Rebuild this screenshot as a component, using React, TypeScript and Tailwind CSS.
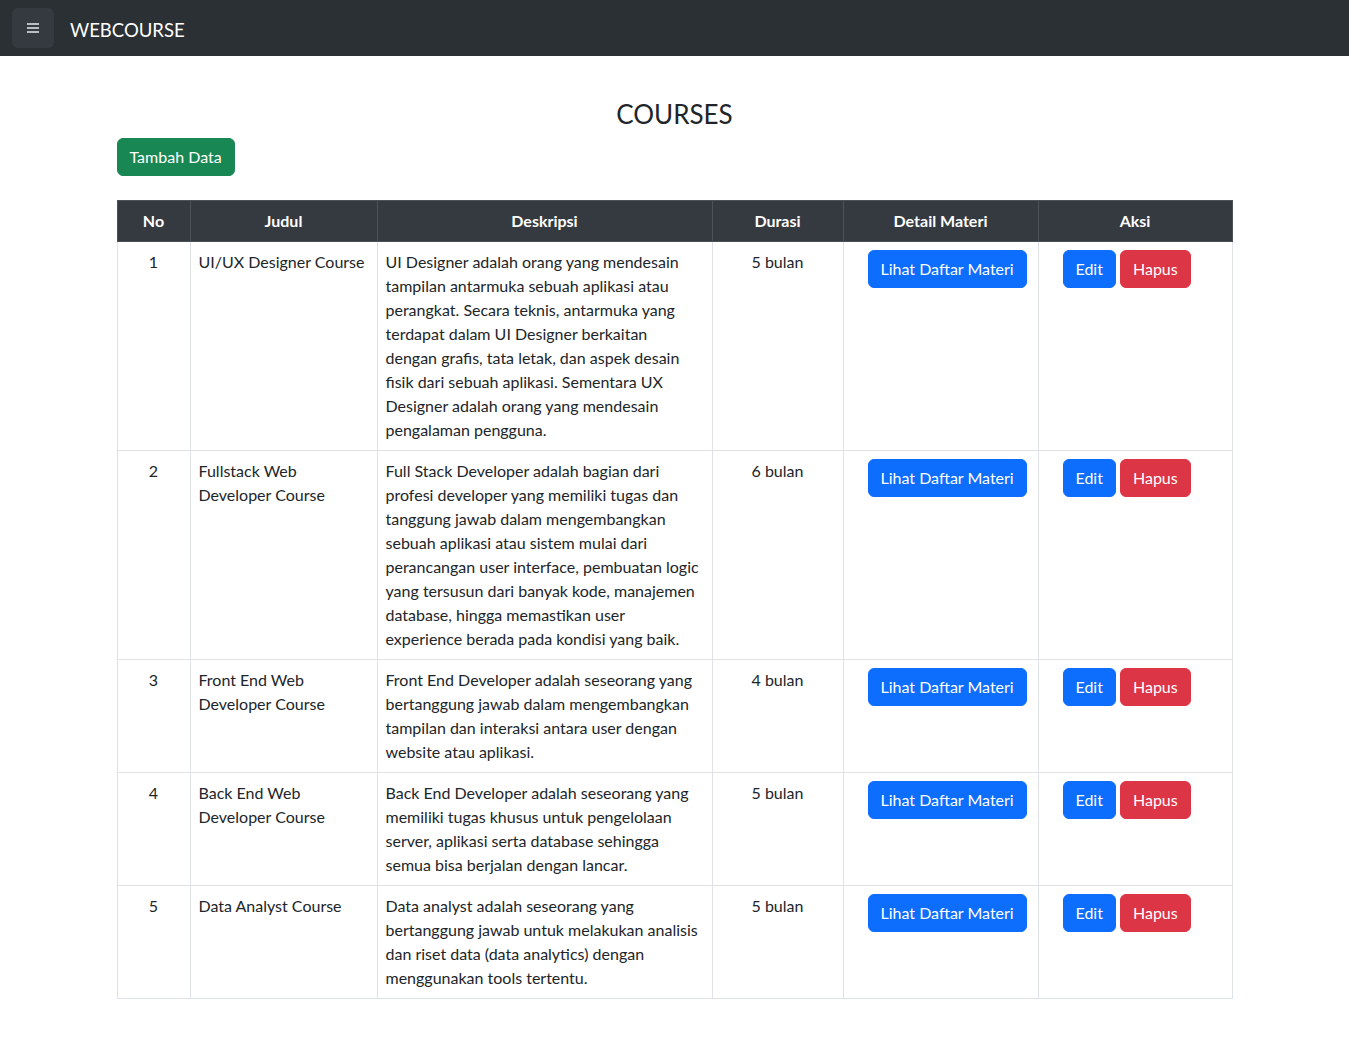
const courses = [
  {
    no: 1,
    judul: ["UI/UX Designer Course"],
    deskripsi: [
      "UI Designer adalah orang yang mendesain",
      "tampilan antarmuka sebuah aplikasi atau",
      "perangkat. Secara teknis, antarmuka yang",
      "terdapat dalam UI Designer berkaitan",
      "dengan grafis, tata letak, dan aspek desain",
      "fisik dari sebuah aplikasi. Sementara UX",
      "Designer adalah orang yang mendesain",
      "pengalaman pengguna.",
    ],
    durasi: "5 bulan",
  },
  {
    no: 2,
    judul: ["Fullstack Web", "Developer Course"],
    deskripsi: [
      "Full Stack Developer adalah bagian dari",
      "profesi developer yang memiliki tugas dan",
      "tanggung jawab dalam mengembangkan",
      "sebuah aplikasi atau sistem mulai dari",
      "perancangan user interface, pembuatan logic",
      "yang tersusun dari banyak kode, manajemen",
      "database, hingga memastikan user",
      "experience berada pada kondisi yang baik.",
    ],
    durasi: "6 bulan",
  },
  {
    no: 3,
    judul: ["Front End Web", "Developer Course"],
    deskripsi: [
      "Front End Developer adalah seseorang yang",
      "bertanggung jawab dalam mengembangkan",
      "tampilan dan interaksi antara user dengan",
      "website atau aplikasi.",
    ],
    durasi: "4 bulan",
  },
  {
    no: 4,
    judul: ["Back End Web", "Developer Course"],
    deskripsi: [
      "Back End Developer adalah seseorang yang",
      "memiliki tugas khusus untuk pengelolaan",
      "server, aplikasi serta database sehingga",
      "semua bisa berjalan dengan lancar.",
    ],
    durasi: "5 bulan",
  },
  {
    no: 5,
    judul: ["Data Analyst Course"],
    deskripsi: [
      "Data analyst adalah seseorang yang",
      "bertanggung jawab untuk melakukan analisis",
      "dan riset data (data analytics) dengan",
      "menggunakan tools tertentu.",
    ],
    durasi: "5 bulan",
  },
];

function Lines({ lines }: { lines: string[] }) {
  return (
    <>
      {lines.map((l, i) => (
        <span key={i} className="block whitespace-nowrap">
          {l}
        </span>
      ))}
    </>
  );
}

export default function App() {
  return (
    <div className="min-h-screen bg-white font-['Segoe_UI','Lato',sans-serif] text-[16px] leading-6 text-[#212529]">
      <nav className="flex h-14 items-center bg-[#2b3035] px-3">
        <button className="flex h-10 w-[42px] items-center justify-center rounded-md bg-[#353a40]">
          <svg width="12" height="12" viewBox="0 0 12 12" aria-hidden="true">
            <rect x="0" y="1" width="12" height="2" fill="#b9bdc1" />
            <rect x="0" y="5" width="12" height="2" fill="#b9bdc1" />
            <rect x="0" y="9" width="12" height="2" fill="#b9bdc1" />
          </svg>
        </button>
        <span className="ml-4 pt-1 text-[18.5px] leading-[30px] text-white">WEBCOURSE</span>
      </nav>

      <main className="mx-auto w-[1140px] px-3 pt-[40px]">
        <h3 className="mb-[7px] pt-px text-center text-[26px] leading-[34px] font-normal">COURSES</h3>
        <button className="rounded-md border border-[#198754] bg-[#198754] px-3 py-1.5 text-white">
          Tambah Data
        </button>

        <table className="mt-6 w-[1115px] table-fixed border-collapse border border-[#dee2e6]">
          <colgroup>
            <col className="w-[73px]" />
            <col className="w-[187px]" />
            <col className="w-[335px]" />
            <col className="w-[131px]" />
            <col className="w-[195px]" />
            <col className="w-[194px]" />
          </colgroup>
          <thead>
            <tr className="bg-[#353a40] text-white">
              {["No", "Judul", "Deskripsi", "Durasi", "Detail Materi", "Aksi"].map((h) => (
                <th
                  key={h}
                  className="border border-[#4b5157] px-2 py-2 text-center font-bold"
                >
                  {h}
                </th>
              ))}
            </tr>
          </thead>
          <tbody>
            {courses.map((c) => (
              <tr key={c.no} className="align-top">
                <td className="border border-[#dee2e6] p-2 text-center">{c.no}</td>
                <td className="border border-[#dee2e6] p-2">
                  <Lines lines={c.judul} />
                </td>
                <td className="border border-[#dee2e6] p-2">
                  <Lines lines={c.deskripsi} />
                </td>
                <td className="border border-[#dee2e6] p-2 text-center">{c.durasi}</td>
                <td className="border border-[#dee2e6] py-2 pl-6 pr-2">
                  <button className="rounded-md border border-[#0d6efd] bg-[#0d6efd] px-3 py-1.5 whitespace-nowrap text-white">
                    Lihat Daftar Materi
                  </button>
                </td>
                <td className="border border-[#dee2e6] py-2 pl-6 pr-2">
                  <div className="flex gap-1">
                    <button className="rounded-md border border-[#0d6efd] bg-[#0d6efd] px-3 py-1.5 text-white">
                      Edit
                    </button>
                    <button className="rounded-md border border-[#dc3545] bg-[#dc3545] px-3 py-1.5 text-white">
                      Hapus
                    </button>
                  </div>
                </td>
              </tr>
            ))}
          </tbody>
        </table>
      </main>
    </div>
  );
}
